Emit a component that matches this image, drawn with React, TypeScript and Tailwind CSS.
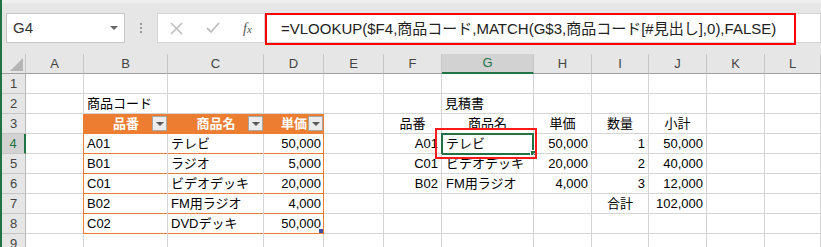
import React from 'react';

type CellProps = { className?: string; children?: React.ReactNode };

const Cell: React.FC<CellProps> = ({ className = '', children }) => (
  <div className={`relative flex items-center whitespace-nowrap border-r border-b border-[#d4d4d4] px-[3px] ${className}`}>{children}</div>
);

const ColHead: React.FC<{ label?: string; active?: boolean }> = ({ label, active }) =>
  active ? (
    <div className="flex items-center justify-center border-r border-b-2 border-r-[#c6c6c6] border-b-[#217346] bg-[#d2d2d2] text-[#217346]">{label}</div>
  ) : (
    <div className="flex items-center justify-center border-r border-b border-r-[#c6c6c6] border-b-[#9f9f9f] bg-[#e6e6e6] text-[#444]">{label}</div>
  );

const RowHead: React.FC<{ n: number; active?: boolean }> = ({ n, active }) =>
  active ? (
    <div className="flex items-center justify-center border-r-2 border-b border-r-[#217346] border-b-[#c6c6c6] bg-[#d2d2d2] text-[#217346]">{n}</div>
  ) : (
    <div className="flex items-center justify-center border-r border-b border-r-[#b8b8b8] border-b-[#c6c6c6] bg-[#e6e6e6] text-[#444]">{n}</div>
  );

const FilterBtn = () => (
  <span className="absolute right-[1px] top-[2px] flex h-[15px] w-[15px] items-center justify-center border border-[#a6a6a6] bg-[#ececec]">
    <span className="h-0 w-0 border-x-[4px] border-t-[4px] border-x-transparent border-t-[#595959]" />
  </span>
);

// table body cell: orange bottom line, grey inner vertical line
const TCell: React.FC<CellProps> = ({ className = '', children }) => (
  <div className={`relative flex items-center whitespace-nowrap px-[3px] shadow-[inset_-1px_0_0_#d4d4d4,inset_0_-1px_0_#ed7d31] ${className}`}>{children}</div>
);

// last column of the table: orange right and bottom
const TEnd: React.FC<CellProps> = ({ className = '', children }) => (
  <div className={`relative flex items-center justify-end whitespace-nowrap px-[3px] shadow-[inset_-1px_0_0_#ed7d31,inset_0_-1px_0_#ed7d31] ${className}`}>{children}</div>
);

// column A next to the table: orange right line
const EdgeCell = () => <div className="shadow-[inset_-1px_0_0_#ed7d31,inset_0_-1px_0_#d4d4d4]" />;

const THead: React.FC<CellProps> = ({ className = '', children }) => (
  <div className={`relative flex items-center whitespace-nowrap bg-[#ed7d31] px-[3px] font-bold text-white ${className}`}>
    {children}
    <FilterBtn />
  </div>
);

const App: React.FC = () => {
  return (
    <div className="relative h-[247px] w-[821px] overflow-hidden border-l-2 border-[#217346] bg-white font-['Liberation_Sans','Noto_Sans_CJK_JP',sans-serif] text-[13px] text-black">
      {/* formula bar */}
      <div className="flex h-[54px] items-start border-t-[3px] border-[#f0f0f0] bg-[#e6e6e6] pt-[10px]">
        <div className="ml-[4px] flex h-[30px] w-[119px] items-center justify-between border border-[#c6c6c6] bg-white pl-[6px] pr-[6px] text-[15px] text-[#333]">
          <span>G4</span>
          <span className="h-0 w-0 border-x-[4px] border-t-[4px] border-x-transparent border-t-[#666]" />
        </div>
        <div className="flex h-[30px] w-[32px] flex-col items-center justify-center gap-[2px]">
          <span className="h-[2px] w-[2px] bg-[#9a9a9a]" />
          <span className="h-[2px] w-[2px] bg-[#9a9a9a]" />
          <span className="h-[2px] w-[2px] bg-[#9a9a9a]" />
        </div>
        <div className="flex h-[30px] flex-1 border border-[#d4d4d4] bg-white">
          <div className="flex w-[107px] items-center border-r border-[#d4d4d4]">
            <svg className="ml-[12px]" width="13" height="13" viewBox="0 0 13 13">
              <path d="M1 1 L12 12 M12 1 L1 12" stroke="#bdbdbd" strokeWidth="1.6" fill="none" />
            </svg>
            <svg className="ml-[23px]" width="14" height="12" viewBox="0 0 14 12">
              <path d="M1 6 L5 10 L13 1" stroke="#bdbdbd" strokeWidth="1.8" fill="none" />
            </svg>
            <span className="ml-[23px] font-['Liberation_Serif',serif] text-[14px] italic text-[#555]">
              f<span className="text-[11px]">x</span>
            </span>
          </div>
          <div className="-my-px flex h-[32px] w-[531px] items-center border-2 border-[#ff0000] pl-[14px] text-[15px] text-[#222]">
            =VLOOKUP($F4,商品コード,MATCH(G$3,商品コード[#見出し],0),FALSE)
          </div>
        </div>
      </div>

      {/* sheet grid */}
      <div className="relative grid auto-rows-[20px] grid-cols-[24px_58px_84px_96px_60px_60px_58px_92px_58px_57px_58px_58px_56px]">
        {/* column headers */}
        <div className="relative border-r border-b border-r-[#c6c6c6] border-b-[#9f9f9f] bg-[#e6e6e6]">
          <svg className="absolute bottom-[2px] right-[2px]" width="13" height="13" viewBox="0 0 13 13">
            <polygon points="13,0 13,13 0,13" fill="#b5b5b5" />
          </svg>
        </div>
        <ColHead label="A" />
        <ColHead label="B" />
        <ColHead label="C" />
        <ColHead label="D" />
        <ColHead label="E" />
        <ColHead label="F" />
        <ColHead label="G" active />
        <ColHead label="H" />
        <ColHead label="I" />
        <ColHead label="J" />
        <ColHead label="K" />
        <ColHead label="L" />

        {/* row 1 */}
        <RowHead n={1} />
        <Cell /><Cell /><Cell /><Cell /><Cell /><Cell /><Cell /><Cell /><Cell /><Cell /><Cell /><Cell />

        {/* row 2 */}
        <RowHead n={2} />
        <Cell />
        <Cell>商品コード</Cell>
        <Cell /><Cell /><Cell /><Cell />
        <Cell>見積書</Cell>
        <Cell /><Cell /><Cell /><Cell /><Cell />

        {/* row 3 */}
        <RowHead n={3} />
        <EdgeCell />
        <THead className="justify-center">品番</THead>
        <THead className="justify-center">商品名</THead>
        <THead className="justify-end pr-[17px]">単価</THead>
        <Cell />
        <Cell className="justify-center">品番</Cell>
        <Cell className="justify-center">商品名</Cell>
        <Cell className="justify-center">単価</Cell>
        <Cell className="justify-center">数量</Cell>
        <Cell className="justify-center">小計</Cell>
        <Cell /><Cell />

        {/* row 4 */}
        <RowHead n={4} active />
        <EdgeCell />
        <TCell>A01</TCell>
        <TCell>テレビ</TCell>
        <TEnd>50,000</TEnd>
        <Cell />
        <Cell className="justify-end">A01</Cell>
        <Cell className="pl-[4px]">
          テレビ
          <div className="pointer-events-none absolute -left-[1px] -top-[1px] h-[22px] w-[93px] border-2 border-[#217346]" />
          <div className="absolute -bottom-[3px] -right-[3px] h-[6px] w-[6px] border border-white bg-[#217346]" />
        </Cell>
        <Cell className="justify-end">50,000</Cell>
        <Cell className="justify-end">1</Cell>
        <Cell className="justify-end">50,000</Cell>
        <Cell /><Cell />

        {/* row 5 */}
        <RowHead n={5} />
        <EdgeCell />
        <TCell>B01</TCell>
        <TCell>ラジオ</TCell>
        <TEnd>5,000</TEnd>
        <Cell />
        <Cell className="justify-end">C01</Cell>
        <Cell className="pl-[4px]">ビデオデッキ</Cell>
        <Cell className="justify-end">20,000</Cell>
        <Cell className="justify-end">2</Cell>
        <Cell className="justify-end">40,000</Cell>
        <Cell /><Cell />

        {/* row 6 */}
        <RowHead n={6} />
        <EdgeCell />
        <TCell>C01</TCell>
        <TCell>ビデオデッキ</TCell>
        <TEnd>20,000</TEnd>
        <Cell />
        <Cell className="justify-end">B02</Cell>
        <Cell className="pl-[4px]">FM用ラジオ</Cell>
        <Cell className="justify-end">4,000</Cell>
        <Cell className="justify-end">3</Cell>
        <Cell className="justify-end">12,000</Cell>
        <Cell /><Cell />

        {/* row 7 */}
        <RowHead n={7} />
        <EdgeCell />
        <TCell>B02</TCell>
        <TCell>FM用ラジオ</TCell>
        <TEnd>4,000</TEnd>
        <Cell /><Cell /><Cell /><Cell />
        <Cell className="justify-center">合計</Cell>
        <Cell className="justify-end">102,000</Cell>
        <Cell /><Cell />

        {/* row 8 */}
        <RowHead n={8} />
        <EdgeCell />
        <TCell>C02</TCell>
        <TCell>DVDデッキ</TCell>
        <TEnd>
          50,000
          <span className="absolute bottom-[1px] right-[1px] h-[4px] w-[4px] bg-[#3d4fa0]" />
        </TEnd>
        <Cell /><Cell /><Cell /><Cell /><Cell /><Cell /><Cell /><Cell />

        {/* row 9 */}
        <RowHead n={9} />
        <Cell /><Cell /><Cell /><Cell /><Cell /><Cell /><Cell /><Cell /><Cell /><Cell /><Cell /><Cell />

        {/* annotation around G4 */}
        <div className="pointer-events-none absolute left-[433px] top-[74px] h-[31px] w-[102px] border-2 border-[#ff1a1a]" />
      </div>
    </div>
  );
};

export default App;
